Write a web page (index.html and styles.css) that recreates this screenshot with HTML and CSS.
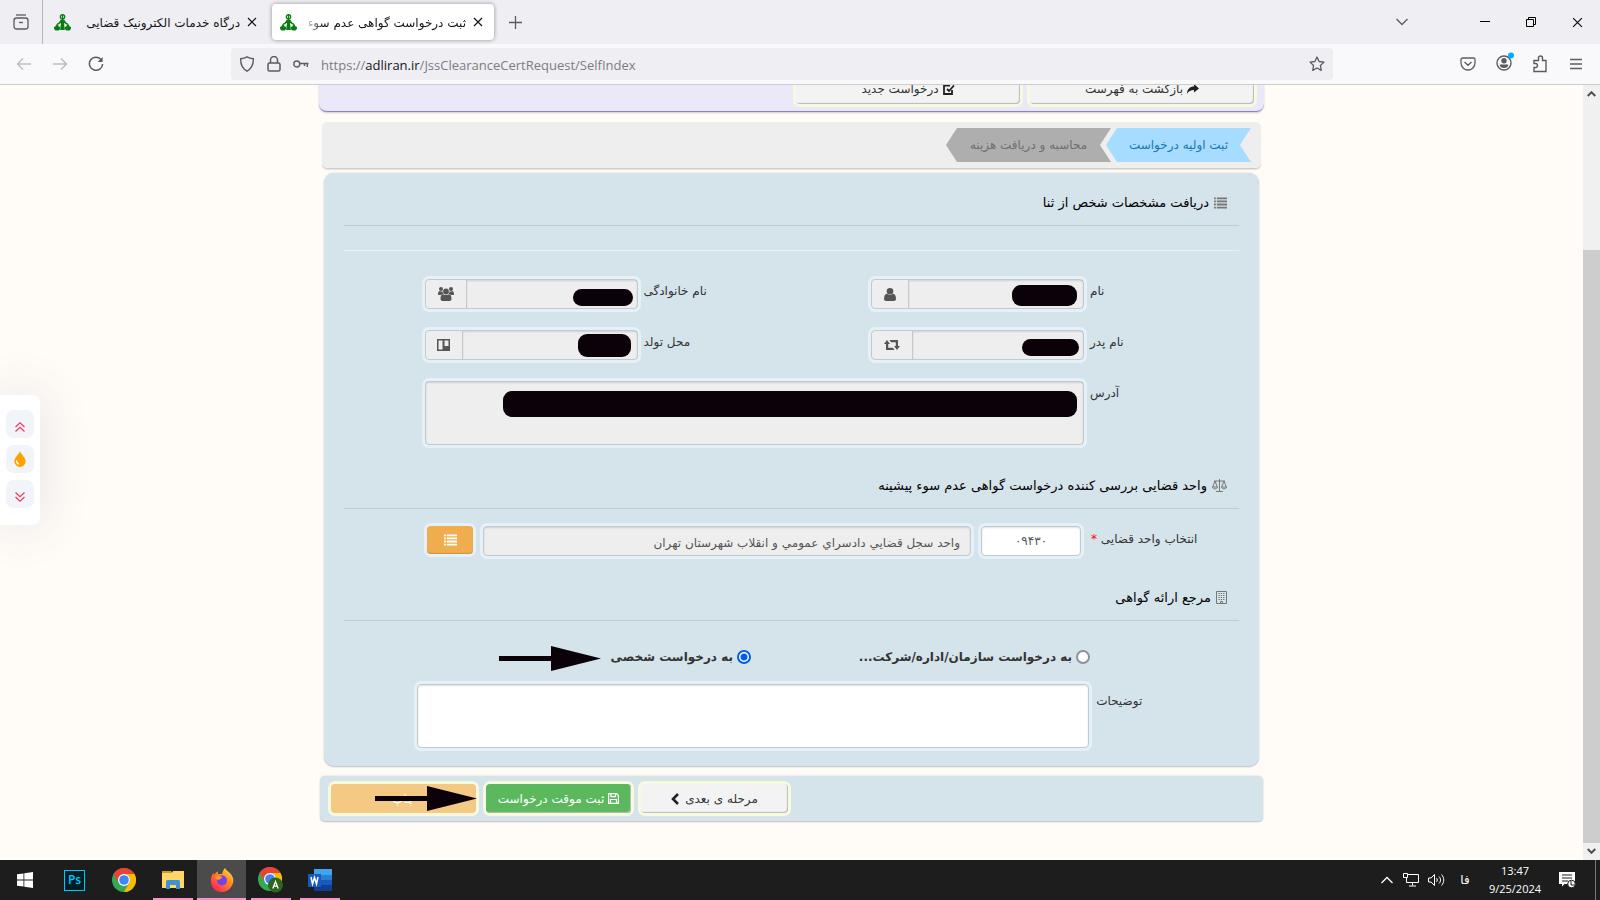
FILE: index.html
```html
<!DOCTYPE html>
<html lang="fa">
<head>
<meta charset="utf-8">
<title>ثبت درخواست گواهی عدم سوء پیشینه</title>
<link rel="stylesheet" href="styles.css">
</head>
<body>
<svg class="defs" aria-hidden="true">
  <symbol id="adl" viewBox="0 0 18 18"><g fill="none" stroke="#0a7d10" stroke-width="1.400"><circle cx="9" cy="3" r="2.300"/><path d="M9 0v16M3.500 11L9 7.500l5.500 3.500"/></g><path fill="#0a7d10" d="M7 6h4l2 3.500H5zM7.500 9h3l1 8h-5zM0 13.500h6.500v1a3.200 3 0 0 1-6.500 0zM11.500 13.500H18v1a3.200 3 0 0 1-6.500 0zM3.200 10l2 3.500h-4zM14.800 10l2 3.500h-4z"/></symbol>
  <symbol id="list" viewBox="0 0 14 12"><path d="M0 0h2v2H0zM3 0h11v2H3zM0 3.300h2v2H0zM3 3.300h11v2H3zM0 6.600h2v2H0zM3 6.600h11v2H3zM0 10h2v2H0zM3 10h11v2H3z"/></symbol>
  <symbol id="x" viewBox="0 0 10 10"><path d="M1 1l8 8M9 1L1 9" fill="none" stroke="currentColor" stroke-width="1.200"/></symbol>
  <symbol id="chrome" viewBox="0 0 24 24"><circle cx="12" cy="12" r="12" fill="#34a853"/><path fill="#ea4335" d="M1.600 6A12 12 0 0 1 22.400 6H12a6 6 0 0 0-5.300 8.800z"/><path fill="#fbbc05" d="M22.400 6A12 12 0 0 1 12 24l5.200-9A6 6 0 0 0 12 6z"/><circle cx="12" cy="12" r="6" fill="#fff"/><circle cx="12" cy="12" r="4.800" fill="#4285f4"/></symbol>
</svg>

<header class="tabstrip">
  <button class="shell-btn recent" aria-label="Recent"><svg width="16" height="16" viewBox="0 0 16 16" fill="none" stroke="#5b5b66" stroke-width="1.300"><path d="M3 1h10"/><rect x="1" y="4" width="14" height="11" rx="2.500"/><path d="M6 8.500h4"/></svg></button>
  <div class="tab">
    <svg class="fav"><use href="#adl"/></svg>
    <span class="tab-title">درگاه خدمات الکترونیک قضایی</span>
    <button class="shell-btn close" aria-label="Close tab"><svg width="10" height="10"><use href="#x"/></svg></button>
  </div>
  <div class="tab active">
    <svg class="fav"><use href="#adl"/></svg>
    <span class="tab-title fade">ثبت درخواست گواهی عدم سوء پیشینه</span>
    <button class="shell-btn close" aria-label="Close tab"><svg width="10" height="10"><use href="#x"/></svg></button>
  </div>
  <button class="shell-btn plus" aria-label="New tab"><svg width="13" height="13" viewBox="0 0 13 13" stroke="#5b5b66" stroke-width="1.300"><path d="M6.500 0v13M0 6.500h13"/></svg></button>
  <div class="window">
    <button class="shell-btn all-tabs" aria-label="All tabs"><svg width="12" height="8" viewBox="0 0 12 8" fill="none" stroke="#5b5b66" stroke-width="1.300"><path d="M.5 1L6 6.500 11.500 1"/></svg></button>
    <button class="shell-btn" aria-label="Minimize"><svg width="10" height="10" viewBox="0 0 10 10" stroke="#000"><path d="M0 4.500h10"/></svg></button>
    <button class="shell-btn" aria-label="Restore"><svg width="10" height="10" viewBox="0 0 10 10" fill="none" stroke="#000"><path d="M.5 2.500h7v7h-7zM2.500 2.500v-2h7v7h-2"/></svg></button>
    <button class="shell-btn" aria-label="Close"><svg width="11" height="11"><use href="#x"/></svg></button>
  </div>
</header>

<nav class="toolbar">
  <div class="nav-btns">
    <button class="shell-btn dim" aria-label="Back"><svg width="16" height="14" viewBox="0 0 16 14" fill="none" stroke="currentColor" stroke-width="1.500"><path d="M15 7H1.500M7 1.500L1.500 7 7 12.500"/></svg></button>
    <button class="shell-btn dim" aria-label="Forward"><svg width="16" height="14" viewBox="0 0 16 14" fill="none" stroke="currentColor" stroke-width="1.500"><path d="M1 7h13.500M9 1.500L14.500 7 9 12.500"/></svg></button>
    <button class="shell-btn" aria-label="Reload"><svg width="16" height="16" viewBox="0 0 16 16" fill="none" stroke="#5b5b66" stroke-width="1.500"><path d="M12.800 3.200A6.600 6.600 0 1 0 14.600 8"/><path d="M14.600 1v5H9.600z" fill="#5b5b66" stroke="none"/></svg></button>
  </div>
  <div class="urlbar">
    <svg width="16" height="16" viewBox="0 0 16 16" fill="none" stroke="#5b5b66" stroke-width="1.400"><path d="M8 .8c2 1.200 4 1.700 6.300 1.900.3 5.300-1 9.500-6.300 12.500C2.700 12.200 1.400 8 1.700 2.700 4 2.500 6 2 8 .8z"/></svg>
    <svg width="14" height="16" viewBox="0 0 14 16" fill="none" stroke="#5b5b66" stroke-width="1.500"><rect x="1" y="7" width="12" height="8" rx="1.500"/><path d="M3.500 7V4a3.500 3.500 0 0 1 7 0v3"/></svg>
    <svg width="16" height="10" viewBox="0 0 16 10" fill="none" stroke="#5b5b66" stroke-width="1.400"><circle cx="3.800" cy="5" r="3"/><path d="M6.800 4.500H15.500M14.300 4.500v3.500M11.500 4.500V7"/></svg>
    <span class="url">https://<b>adliran.ir</b>/JssClearanceCertRequest/SelfIndex</span>
    <svg width="16" height="16" viewBox="0 0 16 16" fill="none" stroke="#5b5b66" stroke-width="1.300" stroke-linejoin="round"><path d="M8 1l2.100 4.500 4.900.6-3.600 3.400.9 4.900L8 12l-4.300 2.400.9-4.900L1 6.100l4.900-.6z"/></svg>
  </div>
  <div class="tools">
    <button class="shell-btn" aria-label="Pocket"><svg width="16" height="14" viewBox="0 0 16 14" fill="none" stroke="#5b5b66" stroke-width="1.300"><path d="M1 2.500A1.500 1.500 0 0 1 2.500 1h11A1.500 1.500 0 0 1 15 2.500V6A7 7 0 0 1 1 6zM4.500 5L8 8.300 11.500 5"/></svg></button>
    <button class="shell-btn account" aria-label="Account"><svg width="18" height="20" viewBox="0 0 18 20"><circle cx="8" cy="11" r="7" fill="none" stroke="#5b5b66" stroke-width="1.400"/><circle cx="8" cy="8.700" r="2.700" fill="#5b5b66"/><path d="M3.800 12.500h8.400a4.200 3.600 0 0 1-8.400 0z" fill="#5b5b66"/><circle cx="15" cy="3.500" r="3" fill="#00aeff"/></svg></button>
    <button class="shell-btn" aria-label="Extensions"><svg width="16" height="18" viewBox="0 0 16 18" fill="none" stroke="#5b5b66" stroke-width="1.400"><path d="M2 16.500V12.500h1.500a2 2 0 0 0 0-4H2V5.500h4.500V3a2 2 0 0 1 4 0v2.500H14v11z"/></svg></button>
    <button class="shell-btn" aria-label="Menu"><svg width="12" height="12" viewBox="0 0 12 12" stroke="#5b5b66" stroke-width="1.300"><path d="M0 1.500h12M0 6h12M0 10.500h12"/></svg></button>
  </div>
</nav>

<div class="viewport">
  <main class="page" dir="rtl">
    <section class="top-actions">
      <button class="btn"><svg width="12" height="10" viewBox="0 0 12 10"><path fill="#222" d="M0 10C0 5 3 2.500 7 2.500V0l5 4.500L7 8.500V6C4 6 1.500 7 0 10z"/></svg>بازگشت به فهرست</button>
      <button class="btn"><svg width="12" height="11" viewBox="0 0 12 11" fill="none" stroke="#222" stroke-width="1.800"><path d="M7 1.500H1v8.500h8V6M4 5l2 2 5-5.500"/></svg>درخواست جدید</button>
    </section>

    <ol class="steps">
      <li class="step current">ثبت اولیه درخواست</li>
      <li class="step">محاسبه و دریافت هزینه</li>
    </ol>

    <form class="panel">
      <h2><svg width="13" height="12" fill="#777"><use href="#list"/></svg>دریافت مشخصات شخص از ثنا</h2>
      <div class="fields">
        <label for="fname">نام</label>
        <div class="group"><input id="fname" readonly><span class="addon"><svg width="12" height="13" viewBox="0 0 12 13" fill="#555"><circle cx="6" cy="3.300" r="3.300"/><path d="M0 11c0-3 1-5 3-5.200 2 1.500 4 1.500 6 0 2 .2 3 2.200 3 5.200 0 1-1 2-2 2H2c-1 0-2-1-2-2z"/></svg></span><i class="mask m1"></i></div>
        <label for="lname">نام خانوادگی</label>
        <div class="group"><input id="lname" readonly><span class="addon wide"><svg width="16" height="14" viewBox="0 0 16 14" fill="#555"><circle cx="3" cy="2" r="2"/><circle cx="13" cy="2" r="2"/><circle cx="8" cy="4.500" r="2.900"/><path d="M0 8c0-2.500.5-4 2-4 1 .7 2 .6 2.500.3C4.500 5.500 5 6.500 5.500 7 4 7 3.500 7.500 3 8zM16 8c0-2.500-.5-4-2-4-1 .7-2 .6-2.500.3 0 1.200-.5 2.200-1 2.700 1.500 0 2 .5 2.500 1zM2.500 12c0-3 .8-4.700 2.700-4.800 1.800 1.200 3.800 1.200 5.600 0 1.900.1 2.700 1.800 2.700 4.800 0 1.200-.9 2-2 2h-7c-1.100 0-2-.8-2-2z"/></svg></span><i class="mask m2"></i></div>
        <label for="father">نام پدر</label>
        <div class="group"><input id="father" readonly><span class="addon wide"><svg width="16" height="10" viewBox="0 0 16 10" fill="#555"><path d="M3 0l3 4H4.200v3.800H9L10.500 10H2V4H0zM13 10l-3-4h1.800V2.200H7L5.500 0H14v6h2z"/></svg></span><i class="mask m3"></i></div>
        <label for="birth">محل تولد</label>
        <div class="group"><input id="birth" readonly><span class="addon"><svg width="13" height="12" viewBox="0 0 13 12"><path fill="#555" d="M0 0h13v12H0z"/><path fill="#eee" d="M1.500 1.500h4v9h-4zM7.500 1.500h4v5.500h-4z"/></svg></span><i class="mask m4"></i></div>
        <label for="address">آدرس</label>
        <div class="group span"><textarea id="address" readonly></textarea><i class="mask m5"></i></div>
      </div>

      <h2><svg width="15" height="13" viewBox="0 0 15 13" fill="none" stroke="#777"><path d="M7.500 0v12M2 2h11M4 12.500h7M3 2L.7 8M3 2l2.300 6M12 2L9.700 8M12 2l2.300 6"/><path d="M.5 8h5c-.5 2.500-4.500 2.500-5 0zM9.500 8h5c-.5 2.500-4.500 2.500-5 0z"/></svg>واحد قضایی بررسی کننده درخواست گواهی عدم سوء پیشینه</h2>
      <div class="unit">
        <label for="code">انتخاب واحد قضایی <em>*</em></label>
        <input id="code" class="code" value="۰۹۴۳۰">
        <input class="unit-name" aria-label="واحد قضایی" readonly value="واحد سجل قضايي دادسراي عمومي و انقلاب شهرستان تهران">
        <button type="button" class="pick" aria-label="فهرست واحدها"><svg width="13" height="12" fill="#fff"><use href="#list"/></svg></button>
      </div>

      <h2><svg width="11" height="13" viewBox="0 0 11 13" fill="none" stroke="#777"><path d="M.5.5h10v12H.5zM4.500 12.500v-2h2v2"/><path d="M2.500 2.500h6M2.500 4.500h6M2.500 6.500h6M2.500 8.500h6" stroke-dasharray="1.300 1"/></svg>مرجع ارائه گواهی</h2>
      <div class="choices">
        <label><input type="radio" name="for">به درخواست سازمان/اداره/شرکت...</label>
        <label class="pointed"><input type="radio" name="for" checked>به درخواست شخصی
          <svg class="arrow" width="102" height="25" viewBox="0 0 102 25" fill="#0b0108"><path d="M0 10h52V0l50 12.500L52 25V15H0z"/></svg></label>
      </div>
      <div class="notes">
        <label for="notes">توضیحات</label>
        <textarea id="notes"></textarea>
      </div>
    </form>

    <footer class="actions">
      <button class="btn"><span>مرحله ی بعدی</span><svg width="8" height="12" viewBox="0 0 8 12" fill="none" stroke="#222" stroke-width="2.600"><path d="M7 1L2 6l5 5"/></svg></button>
      <button class="btn green"><svg width="11" height="11" viewBox="0 0 11 11" fill="none" stroke="#fff" stroke-width="1.200"><path d="M.6.600h8l1.800 1.800v8H.6zM3 .6v3h4.500v-3M2.500 10.400V6.500h6v3.900"/></svg>ثبت موقت درخواست</button>
      <button class="btn orange">چاپ
        <svg class="arrow" width="102" height="25" viewBox="0 0 102 25" fill="#0b0108"><path d="M0 10h52V0l50 12.500L52 25V15H0z"/></svg></button>
    </footer>
  </main>

  <div class="scroll">
    <svg width="9" height="6" viewBox="0 0 9 6" fill="none" stroke="#505050" stroke-width="2"><path d="M.7 5L4.500 1.200 8.300 5"/></svg>
    <div class="track"><div class="thumb"></div></div>
    <svg width="9" height="6" viewBox="0 0 9 6" fill="none" stroke="#505050" stroke-width="2"><path d="M.7 1l3.800 3.800L8.300 1"/></svg>
  </div>

  <aside class="side">
    <button class="jump" aria-label="Up"><svg width="10" height="10" viewBox="0 0 10 10" fill="none" stroke="#f5365c" stroke-width="1.200"><path d="M.5 5L5 .8 9.500 5M.5 9.500L5 5.300l4.500 4.200"/></svg></button>
    <button aria-label="Color"><svg width="12" height="16" viewBox="0 0 12 16"><path fill="#ffa200" d="M6 0c1 3.500 5.700 6.500 5.700 10.300a5.700 5.700 0 0 1-11.400 0C.3 6.500 5 3.500 6 0z"/><path d="M2.500 9.500c0 2 1 3.200 2.500 3.700" fill="none" stroke="#fff" stroke-width="1.200"/></svg></button>
    <button class="jump" aria-label="Down"><svg width="10" height="10" viewBox="0 0 10 10" fill="none" stroke="#f5365c" stroke-width="1.200"><path d="M.5.5L5 4.700 9.500.5M.5 5L5 9.200 9.500 5"/></svg></button>
  </aside>
</div>

<div class="taskbar">
  <button class="task start" aria-label="Start"><svg width="16" height="16" viewBox="0 0 16 16" fill="#fff"><path d="M0 2.300L6.500 1.400v6.200H0zM7.300 1.300L16 0v7.600H7.300zM0 8.400h6.500v6.200L0 13.700zM7.300 8.400H16V16l-8.700-1.300z"/></svg></button>
  <button class="task"><span class="ps">Ps</span></button>
  <button class="task" aria-label="Chrome"><svg width="24" height="24"><use href="#chrome"/></svg></button>
  <button class="task open" aria-label="Explorer"><svg width="22" height="20" viewBox="0 0 22 20"><path fill="#d99a16" d="M0 1h9l2 2H0z"/><path fill="#ffd768" d="M0 3h10l1-2h11v17H0z"/><path fill="#3f92d2" d="M4 11.500A1.500 1.500 0 0 1 5.500 10h11a1.500 1.500 0 0 1 1.500 1.500V19h-4v-4H8v4H4z"/></svg></button>
  <button class="task open focus" aria-label="Firefox"><svg width="24" height="24" viewBox="0 0 24 24"><defs><linearGradient id="fx" x1="1" y1="0" x2="0.200" y2="1"><stop offset="0" stop-color="#fff44f"/><stop offset=".45" stop-color="#ff8a1e"/><stop offset="1" stop-color="#ff1f5e"/></linearGradient></defs><path fill="url(#fx)" d="M15 0c1 3 6 4 8 10 1.800 7-4 14-11 14C4.500 24 0 18 1 11c.2-2.500 1.200-4.500 2.500-6L4 7c1-2 2.500-3 4-3.500L8 6h4c1-3 1.500-4.500 3-6z"/><circle cx="12" cy="12.500" r="5" fill="#7542e5"/><path fill="#ff9a20" d="M5 9c3-2 6-.5 7.500 0-1 2-3 1.800-3.500 3-1.500 0-3.500-1-4-3z"/></svg></button>
  <button class="task open" aria-label="Chrome A"><svg width="25" height="26" viewBox="0 0 25 26"><use href="#chrome" width="24" height="24"/><circle cx="17.500" cy="18" r="7.500" fill="#2c6420"/><path d="M14.800 21.500L17.500 14.500l2.700 7M15.800 19.200h3.400" fill="none" stroke="#fff" stroke-width="1.300"/></svg></button>
  <button class="task open" aria-label="Word"><svg width="24" height="22" viewBox="0 0 24 22"><path fill="#41a5ee" d="M6 0h18v6H6z"/><path fill="#2b7cd3" d="M6 6h18v5H6z"/><path fill="#185abd" d="M6 11h18v5H6z"/><path fill="#103f91" d="M6 16h18v6H6z"/><path fill="#185abd" d="M0 5h13v13H0z"/><path d="M3 8l1.500 7 2-6.500 2 6.500L10 8" fill="none" stroke="#fff" stroke-width="1.500"/></svg></button>
  <div class="tray">
    <svg width="12" height="8" viewBox="0 0 12 8" fill="none" stroke="#fff" stroke-width="1.300"><path d="M.5 7L6 1.500 11.500 7"/></svg>
    <svg width="17" height="14" viewBox="0 0 17 14" fill="none" stroke="#fff"><path d="M4.500 1.500h11v8H3.500V5M.5.5h4v4h-4zM9.500 9.500v3M6 13h7"/></svg>
    <svg width="17" height="14" viewBox="0 0 17 14" fill="none" stroke="#fff"><path d="M.5 5v4H3l3.500 3.500v-11L3 5zM8.500 5c1 1.200 1 2.800 0 4M11 3.500c2 2 2 5 0 7M13.500 1.500c3 3.200 3 7.800 0 11"/></svg>
    <span class="lang">فا</span>
    <time class="clock"><span>13:47</span><span>9/25/2024</span></time>
    <svg width="17" height="17" viewBox="0 0 17 17"><path fill="#fff" d="M0 0h16v12H5.500L3 14.500V12H0z"/><path d="M3 3h10M3 6h10M3 9h6" stroke="#1d1d1d"/><circle cx="12.500" cy="12" r="3.800" fill="#fff" stroke="#1d1d1d"/><path d="M12 9v4h3.500" stroke="#1d1d1d" fill="none"/></svg>
  </div>
</div>
</body>
</html>
```

FILE: styles.css
```css
* { box-sizing: border-box; }
body {
  margin: 0;
  height: 100vh;
  display: flex;
  flex-direction: column;
  overflow: hidden;
  background: #fffcf7;
  color: #333;
  font: 12px/20px "DejaVu Sans", sans-serif;
}
button, input, textarea { font: inherit; color: inherit; }
button { cursor: pointer; }
svg { flex: none; }
.defs { position: absolute; width: 0; height: 0; }

/* browser shell */
.shell-btn {
  border: 0; padding: 0; background: none; color: #15141a;
  display: flex; align-items: center; justify-content: center;
}
.tabstrip { flex: none; height: 44px; display: flex; align-items: center; background: #efeef3; }
.recent { width: 43px; height: 44px; border-right: 1px solid #b8b7bd; }
.tab { display: flex; align-items: center; width: 222px; height: 36px; margin: 0 4px 0 3px; padding: 0 10px 0 8px; border-radius: 4px; }
.tab.active { background: #fff; margin: 0 12px 0 0; box-shadow: 0 0 4px rgba(0,0,0,.4); }
.fav { width: 17px; height: 17px; }
.tab-title { flex: 1; min-width: 0; margin: 0 6px; padding-top: 2px; direction: rtl; white-space: nowrap; overflow: hidden; color: #15141a; font-size: 12px; }
.fade { -webkit-mask-image: linear-gradient(to right, transparent, #000 20px); mask-image: linear-gradient(to right, transparent, #000 20px); }
.close { width: 12px; }
.plus { width: 18px; }
.window { margin-left: auto; display: flex; }
.window .shell-btn { width: 46px; height: 44px; }
.window .all-tabs { margin-right: 37px; }
.toolbar { flex: none; display: flex; align-items: center; height: 41px; background: #f9f9fb; border-bottom: 1px solid #cccccf; }
.nav-btns { display: flex; padding-left: 6px; width: 231px; }
.nav-btns .shell-btn { width: 36px; height: 32px; }
.shell-btn.dim { color: #bcbcc2; }
.urlbar { flex: 1; display: flex; align-items: center; gap: 12px; height: 32px; padding: 0 8px; border-radius: 4px; background: #efeef3; }
.url { flex: 1; padding-top: 2px; color: #7d7c84; font: 13px/20px "Open Sans", sans-serif; }
.url b { font-weight: 400; color: #15141a; }
.tools { display: flex; justify-content: flex-end; width: 267px; padding-right: 6px; }
.tools .shell-btn { width: 36px; height: 32px; }
.tools .account { padding: 0 0 4px 2px; }

/* page */
.viewport { flex: 1; min-height: 0; display: flex; position: relative; overflow: hidden; }
.page { flex: 1; padding: 0 calc(20% - 3px); }
.top-actions {
  display: flex; gap: 10px; margin: -28px 2px 0; padding: 13px 10px 7px;
  background: #ebe8fa; border-bottom: 1px solid #8d7cd8; border-radius: 0 0 8px 8px; box-shadow: 0 1px 2px rgba(0,0,0,.2);
}
.btn {
  display: flex; align-items: center; justify-content: center; gap: 4px;
  height: 34px; padding: 0; border: 0; border-radius: 4px;
  background: #f3f3f3; box-shadow: 0 0 0 3px #f8fae0, inset -1px -1px 1px #bbb;
  white-space: nowrap;
}
.top-actions .btn { width: 224px; padding-top: 4px; }
.steps {
  display: flex; gap: 0; list-style: none; margin: 10px 5px 4px; padding: 6px 10px;
  background: #eee; border-bottom: 1px solid #ccc; border-radius: 5px; box-shadow: 0 1px 1px rgba(0,0,0,.1);
}
.step {
  width: 165px; height: 34px; margin-right: -5px; text-align: center; line-height: 34px;
  background: #aeaeae; color: #707070;
  clip-path: polygon(100% 0, 11px 0, 0 50%, 11px 100%, 100% 100%, calc(100% - 11px) 50%);
}
.step.current { width: 145px; margin-right: 0; background: #a6dcff; color: #1b76b8; }
.panel {
  margin: 0 7px; padding: 14px 20px 18px; background: #d5e3eb;
  border-bottom: 1px solid #c8ccce; border-radius: 10px; box-shadow: 0 0 2px rgba(0,0,0,.2);
}
h2 {
  display: flex; align-items: center; gap: 5px; height: 39px; margin: 0; padding: 0 12px 7px 0;
  border-bottom: 1px solid #c4cacd; color: #000; font-size: 13px; font-weight: 400; line-height: 20px;
}
.fields {
  display: grid; grid-template-columns: 150fr 212fr 223fr 212fr 75fr; gap: 21px 6px;
  margin-top: 24px; padding: 28px 0 25px; border-top: 1px solid #eee;
}
.fields > label, .unit > label, .notes > label { text-align: end; }
.fields > label { padding-top: 2px; }
.fields > label:nth-of-type(odd) { grid-column: 1; }
.fields > label:nth-of-type(even) { grid-column: 3; }
.group { display: flex; position: relative; height: 30px; border: 1px solid #c8c8c8; border-radius: 4px; background: #eee; box-shadow: 0 0 0 3px #e3f1fb; }
.group input, .group textarea { flex: 1; min-width: 0; border: 0; padding: 0 10px; background: none; resize: none; outline: 0; box-shadow: inset 0 1px 2px rgba(0,0,0,.12); }
.group.span { grid-column: 2 / 5; height: 64px; }
.addon { display: flex; align-items: center; justify-content: center; width: 37px; border-right: 1px solid #c8c8c8; }
.addon.wide { width: 41px; }
.mask { position: absolute; background: #0b0108; border-radius: 9px; }
.m1 { right: 6px; top: 5px; width: 65px; height: 21px; }
.m2 { right: 4px; top: 9px; width: 60px; height: 17px; }
.m3 { right: 4px; top: 8px; width: 57px; height: 17px; }
.m4 { right: 6px; top: 3px; width: 53px; height: 23px; }
.m5 { right: 6px; top: 9px; width: 574px; height: 26px; }
.unit { display: grid; grid-template-columns: 148fr 100fr 488fr 46fr 73fr; gap: 10px; padding: 17px 0 26px; }
.unit > label { padding-top: 3px; }
.unit em { color: #f00; font-style: normal; }
.unit input, .notes textarea { border: 1px solid #c8c8c8; border-radius: 4px; outline: 0; min-width: 0; background: #fff; box-shadow: 0 0 0 3px #e3f1fb, inset 0 1px 2px rgba(0,0,0,.12); }
.unit input { height: 30px; padding: 4px 10px 0; color: #555; }
.unit input.unit-name { background: #eee; }
.unit input.code { text-align: center; padding-top: 0; }
.pick { display: flex; align-items: center; justify-content: center; height: 28px; padding: 0; border: 0; border-radius: 4px; background: #f0ad4e; box-shadow: 0 0 0 3px #e3f1fb, inset 0 -1px 1px #cc9340; }
.choices { display: flex; height: 63px; padding: 25px 149px 0 0; font-weight: 700; }
.choices label { display: flex; align-items: center; gap: 4px; height: 22px; width: 339px; white-space: nowrap; }
.choices label.pointed { width: auto; position: relative; }
.choices input { appearance: none; width: 14px; height: 14px; margin: 0; border: 2px solid #8f8f9d; border-radius: 50%; background: #fff; }
.choices input:checked { border-color: #0060df; background: radial-gradient(#0060df 3px, #fff 4px); }
.arrow { position: absolute; }
.pointed .arrow { right: calc(100% + 10px); top: 0; }
.notes { display: grid; grid-template-columns: 143fr 673fr 66fr; gap: 7px; }
.notes > label { padding-top: 7px; }
.notes textarea { height: 64px; resize: none; }
.actions {
  display: flex; justify-content: flex-end; gap: 10px; margin: 9px 3px 0; padding: 8px 11px 8px;
  background: #d5e3eb; border-bottom: 1px solid #c8ccce; border-radius: 5px; box-shadow: 0 0 2px rgba(0,0,0,.2);
}
.actions .btn { width: 145px; height: 29px; }
.actions .btn:first-child { width: 147px; gap: 6px; }
.actions .green { background: #5cb85c; color: #fff; }
.actions .orange { position: relative; background: #f3c983; color: #fff; box-shadow: 0 0 0 3px #f8fae0; }
.orange .arrow { left: 44px; top: 2px; }

.scroll { flex: none; width: 17px; display: flex; flex-direction: column; align-items: center; padding: 6px 0; background: #f0f0f0; }
.track { flex: 1; width: 17px; margin: 5px 0; padding-top: 148px; }
.thumb { height: 100%; background: #cdcdcd; }
.side {
  position: absolute; left: 0; top: 310px; display: flex; flex-direction: column; gap: 7px;
  padding: 15px 6px 17px; background: #fff; border-radius: 0 8px 8px 0; box-shadow: 0 0 50px rgba(82,63,105,.15);
}
.side button { display: flex; align-items: center; justify-content: center; width: 28px; height: 28px; padding: 0; border: 0; border-radius: 7px; background: #f1f5f9; }
.side .jump { padding-top: 6px; }

/* taskbar */
.taskbar { flex: none; display: flex; height: 40px; background: #1d1d1d; color: #fff; font-family: "Open Sans", sans-serif; }
.task { display: flex; align-items: center; justify-content: center; width: 49px; padding: 0; border: 0; background: linear-gradient(#ff8fd4, #ff8fd4) center bottom / 0 2px no-repeat; }
.start { margin-right: 1px; }
.task.open { background-size: 40px 2px; }
.task.focus { background-color: #4b4b4b; background-size: 100% 2px; }
.ps { width: 21px; height: 21px; border: 1px solid #00c8ff; background: #001d26; color: #00c8ff; font-size: 12px; font-weight: 600; line-height: 18px; }
.tray { margin-left: auto; display: flex; align-items: center; padding-right: 4px; margin-right: 4px; border-right: 1px solid #777; }
.tray > svg { margin-right: 8px; }
.tray > svg:first-child { margin-right: 10px; }
.tray > svg:last-child { margin: 0 15px 0 0; }
.lang { width: 24px; margin-right: 7px; text-align: center; font-family: "DejaVu Sans", sans-serif; }
.clock { display: flex; flex-direction: column; align-items: center; width: 62px; margin-right: 13px; font-size: 11px; line-height: 18px; }
```
